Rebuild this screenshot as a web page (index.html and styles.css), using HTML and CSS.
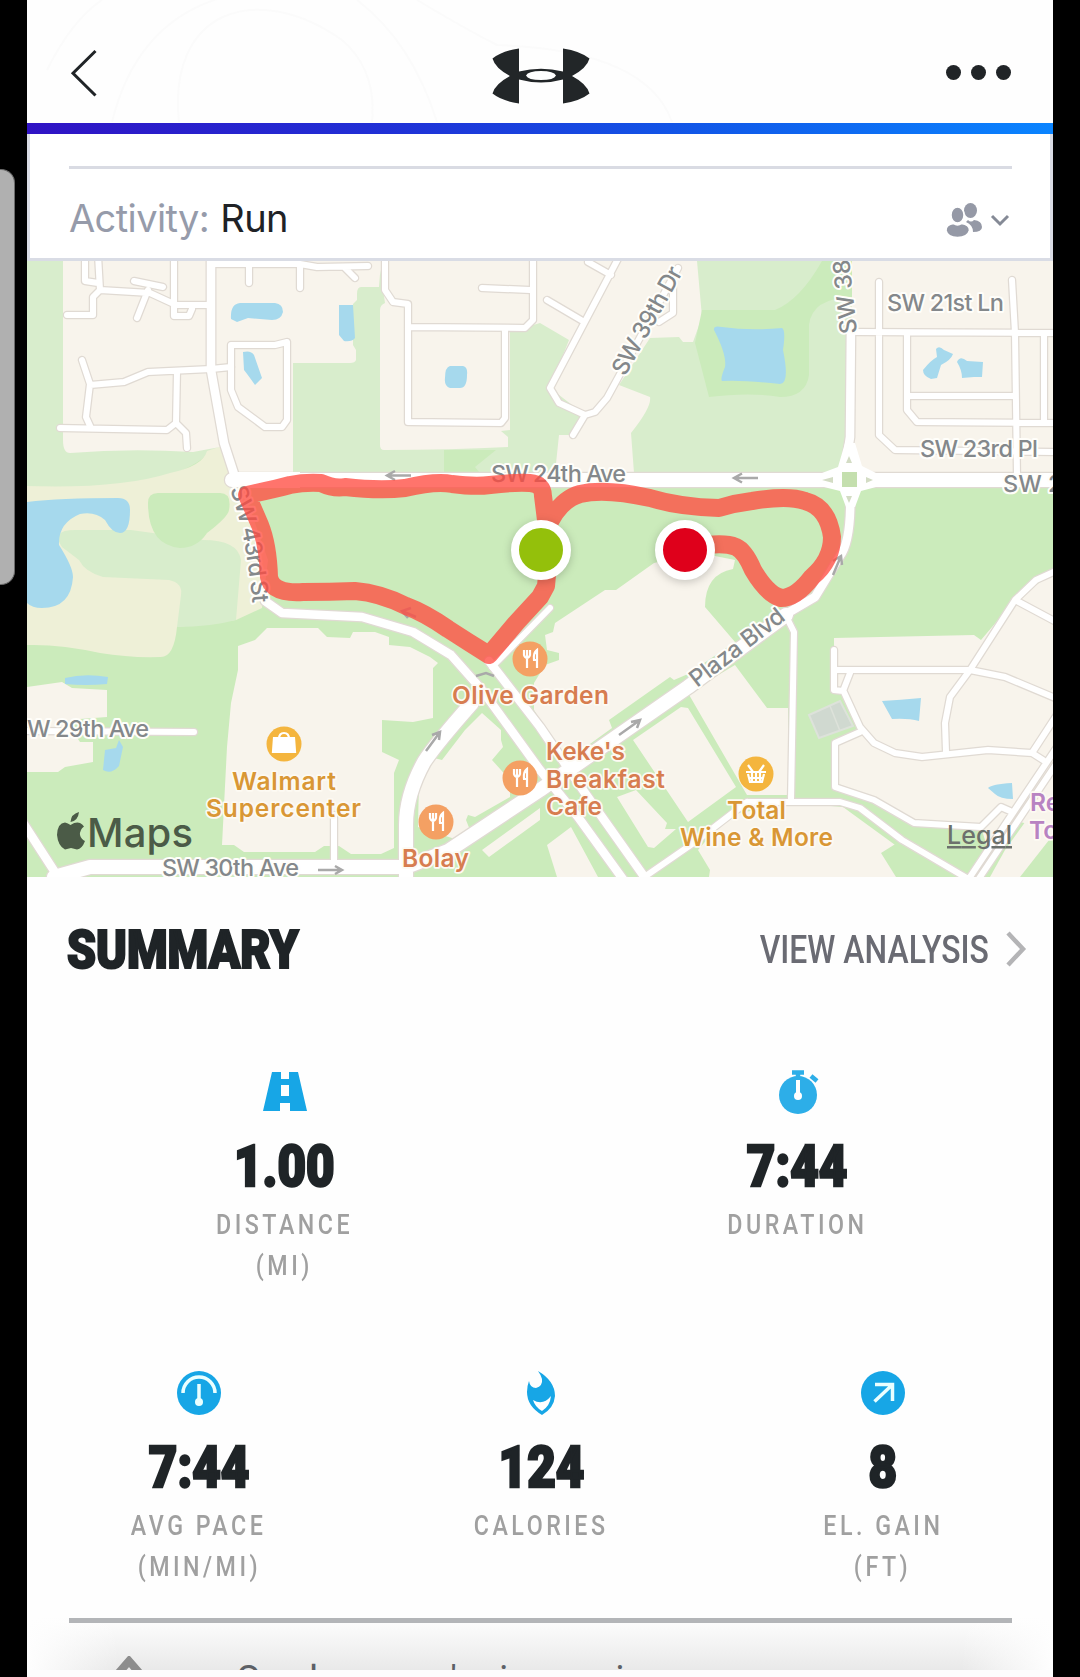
FILE: index.html
```html
<!DOCTYPE html>
<html lang="en">
<head>
<meta charset="utf-8">
<title>Workout summary</title>
<link rel="stylesheet" href="styles.css">
</head>
<body>
<div class="stage">
<div class="edge-handle"></div>
<main class="app">
  <header class="topbar">
    <svg class="contours" viewBox="0 0 1026 122"><path d="M20 70Q45 20 75 0M85 122Q110 20 200-4M152 122C140 10 230-20 315 40Q350 70 345 122M390 0Q440 30 470 45Q620 50 645 122M410 122q-25-80-80-122"/></svg>
    <svg class="back" viewBox="0 0 28 48"><path d="M25.500 2L3 24.200L25.500 46.500"/></svg>
    <svg class="logo" viewBox="0 0 98 56"><path fill-rule="evenodd" d="M27 .5V23.500Q49 18 71 23.500V.5Q88 3 97.500 10.500Q95 20 80 28Q95 36 97.500 45.500Q88 53 71 55.500V31.500Q49 37.500 27 31.500V55.500Q10 53 .5 45.500Q3 36 18 28Q3 20 .5 10.500Q10 3 27 .5ZM34 27.500Q36 32 49 32Q62 32 64 27.500Q62 23 49 23Q36 23 34 27.500Z"/></svg>
    <div class="more"><i></i><i></i><i></i></div>
  </header>
  <div class="accent"></div>
  <section class="activity">
    <div class="rule"></div>
    <div class="activity-row">
      <p class="activity-text"><span>Activity:</span> Run</p>
      <svg class="friends" viewBox="0 0 64 36">
        <g fill="#9599a6"><ellipse cx="24.500" cy="8.500" rx="6.500" ry="7.500"/><path d="M22 18q3 3 6 0q8 1 8 7q0 5-9 5q0-7-7-10z"/><g stroke="#fff" stroke-width="1.500"><ellipse cx="11.500" cy="13" rx="6.500" ry="8"/><path d="M0 28.500q0-6 7.500-7q4 3 8 0q8 1 8 7q-2 7-12 7t-11.500-7z"/></g></g>
        <path d="M46 14l8 8 8-8" fill="none" stroke="#858a96" stroke-width="3"/>
      </svg>
    </div>
  </section>
  <svg class="map" viewBox="27 261 1026 616" xmlns="http://www.w3.org/2000/svg">
    <defs>
      <g id="streets">
        <path d="M85 255V281L98 283M98 255L100 290L93 297V315H67M100 290L150 293L176 305H207M134 281L163 287M148 290L137 318M174 255V316H189L192 309M211 264H300L317 267L368 266M344 267L355 278M249 264V283M300 264V288M82 360L90 384L86 417L91 428M90 385L124 382L148 372L211 369M177 372L176 423L167 430L60 428M176 423L186 433L187 448M211 369L231 367"/>
        <path d="M231 345H275L287 342V420L282 427H265L238 407L231 390Z"/>
        <path d="M385 255V290L393 302L408 304V422L501 423L505 418V328M408 327L525 328L533 320V255M482 288L530 290M620 255L550 388L559 403L585 415L595 412L607 398L678 268M585 415L573 435M547 300L581 320M588 262L611 275M673 285V313L659 322"/>
        <path d="M879 282V435L895 450L1060 452M856 332L1060 333M1012 280L1015 333L1017 475M907 333V410L917 422L1060 423M907 396H1015M1044 333V423"/>
        <path d="M20 731L194 732M334 815V865M550 608L492 667M788 620L794 632L791 800M747 802H840L860 808L902 840L970 880M747 802L695 842L640 880M834 650V690L843 691L850 673M834 670H970L1005 677L1060 700M1060 569L1036 580L1015 600L970 670L950 697L945 723L946 752M1015 600L1060 624M843 690L860 727L874 743L895 753L922 757L988 750L1032 753L1043 760M1032 753L1060 710M860 732L835 743V787L874 800L914 823L981 827L1001 807L1010 811M1063 738L968 880M1069 745L978 880"/>
      </g>
      <g id="mains">
        <path d="M211 255V370L224 443L236 480M851 325L850 437L845 470M850 487Q852 540 840 556L815 597L781 617M265 601L282 613L362 617L413 632L451 655L482 690L540 770L578 817L625 882M489 661L540 727L585 793L648 882"/>
        <path d="M20 818L60 880"/>
      </g>
      <g id="avenues">
        <path d="M232 480H1060M54 877L90 867H406L448 851L540 790L688 687L786 615M472 703Q435 745 424 762Q406 795 406 825V885"/>
      </g>
      <g id="fork"><path d="M-6-9v5q1 3 3 3v10M-3-9v8M0-9v5q-1 3-3 3M7 9V-9Q3-6 4 1H7"/></g>
    </defs>
    <rect x="27" y="261" width="1026" height="616" fill="#cbebbb"/>
    <path fill="#d8edcc" d="M27 261H852V473H238L207 455Q160 495 27 486Z"/>
    <path fill="#eef0d7" d="M27 486Q120 489 170 473Q203 466 207 451L222 446L240 480L268 560L262 608L236 620L177 627Q174 658 160 657Q130 658 100 653Q60 644 27 645Z"/>
    <path fill="#d8edcc" d="M62 547Q50 530 75 530H131L203 540Q238 540 241 560L236 620Q210 627 177 627L181 595Q183 583 169 580L103 577Q85 572 79 560Z"/>
    <path fill="#cbebbb" d="M148 503Q148 493 158 493H220Q232 493 229 510Q228 517 207 533Q197 548 180 548Q148 545 148 503Z"/>
    <path fill="#f8f4ec" d="M63 261H381L379 287H361Q357 287 357 294V300L353 304V345L356 350V360Q355 363 350 363H293V473H240L220 447L193 452Q130 448 70 453Q63 453 63 440Z
      M379 261H540V323L510 332V430L501 431L508 437V447Q450 450 384 450Q380 450 380 445V310Q380 305 385 303Z
      M540 261H697L702 317L693 342H683L679 337L650 338L619 385L650 397Q652 407 631 433L634 473H555L559 435H573L585 415L550 388L569 340L540 323Z
      M852 261H1053V473H856L851 430Z"/>
    <path fill="#cbebbb" d="M822 261H852V297Q812 298 809 325V375Q806 397 780 397Q750 392 709 397L695 343L702 310H775Q800 300 822 261ZM444 450H496L475 467L480 473H444Z"/>
    <path fill="#f8f4ec" d="M267 628H318L327 637L350 638L353 632H375L389 637V645L410 647L430 657L438 663L433 668V718L413 722L382 720V752L399 760L394 773V848L381 854H351L339 846H324L315 852H244L234 845H222L227 747L231 703L238 670V646L255 640Z
      M27 687L62 682L72 688L107 690V717L80 719L70 727L80 742H93V762L65 767L58 772H27Z
      M482 713L501 730V740L503 747L492 760L510 780V797L475 817L468 815L466 820L472 835L458 840L418 827L419 780L430 757L442 760L465 730ZM482 850L540 808V820L489 857Z
      M555 623L605 590H616L654 563L700 553L735 560L733 569Q705 574 705 607L735 642L688 674L674 680L670 677L609 720L612 728L565 762L534 710V683L545 665L559 660V653L547 650L545 635L553 632Z
      M735 665L767 708H788V795H747L688 693Z M633 740L681 707L688 708L736 787L688 822Z M617 797L636 790L667 823L665 829H676L654 848L648 847Z M728 815L795 803L843 807L902 850L957 877H709L710 870L698 850Z M547 845L571 827L598 877H557Z
      M834 638L974 635L981 640L1015 600L1053 573V830L1012 820L991 860L981 827L914 825L871 797L836 783L833 743L864 730L843 690H834Z"/>
    <path fill="#cbebbb" d="M881 853L897 843L960 877H896ZM865 815L912 827L978 831L950 865Z"/>
    <path fill="#f8f4ec" d="M1005 850L1028 818L1053 800V850L1022 877H990Z"/>
    <path fill="#cbebbb" d="M1053 835V877H1020Z"/>
    <path fill="#a6d9ed" d="M27 502Q60 498 118 498Q130 498 130 510Q130 533 120 533Q112 533 105 520Q95 511 80 514Q58 523 59 545Q73 567 73 577Q71 608 42 608Q32 608 27 603Z
      M231 319Q230 304 240 303H275Q283 304 283 312Q281 320 272 320L248 318L237 322ZM339 305H353L355 338Q352 342 344 341L339 335ZM243 352Q251 350 254 355L262 378L255 385Q248 375 244 370ZM450 366H463Q468 367 467 375Q467 388 460 388H450Q444 386 445 378Q445 367 450 366Z
      M714 330Q713 325 722 327Q750 331 782 328Q786 330 783 350Q790 384 780 384Q745 380 722 381Q720 379 725 367Q727 355 714 330ZM936 349Q939 345 944 350L953 354Q951 360 941 365L937 378L931 379Q923 376 923 370Q931 360 937 357ZM957 362Q960 355 967 361L983 362L982 377H974L962 378Q962 370 957 362Z
      M65 678Q85 673 108 677L107 684Q85 686 65 684ZM119 740L123 747L119 766Q111 775 103 770L105 750L116 748ZM882 701Q900 700 921 698L919 721Q908 718 892 719ZM988 788Q992 784 1012 783L1013 799Q1000 799 995 794Z"/>
    <path fill="#d0d9d0" stroke="#dde2da" stroke-width="2" d="M809 715L840 701L853 726L819 738Z"/>
    <path stroke="#dde2da" stroke-width="1.500" d="M830 706L840 731"/>
    <g class="casing"><use href="#streets" stroke-width="8.500"/><use href="#mains" stroke-width="11"/><use href="#avenues" stroke-width="16.500"/></g>
    <g class="road"><use href="#streets" stroke-width="6"/><use href="#mains" stroke-width="8.500"/><use href="#avenues" stroke-width="14"/></g>
    <path fill="#fff" d="M230 472H300V488H240ZM822 473L838 467L845 443H855L862 466L876 473V487L861 491L855 507H846L840 491L824 487Z"/>
    <path fill="#c4dfae" d="M842 472H857V487H842Z"/>
    <path fill="#d3dcc4" d="M822 480L833 477V483ZM866 477L873 480L866 483ZM846 463L849 456L852 463ZM846 496H852L849 503Z"/>
    <g class="arrow"><path d="M411 475.500H387M395 471L387 475.500L395 480M758 478H734M742 473.500L734 478L742 482.500M318 870H342M335 866L342 870L335 874M426 751L440 732M432 735L440 732L439 740M619 735L640 720M631 722L640 720L637 728M833 575L841 556M833 561L841 556L842 565M416 617L402 611M411 608L402 611L408 618M476 676L486 673L494 676"/></g>
    <g class="street">
      <text x="491" y="482" textLength="135">SW 24th Ave</text>
      <text x="887" y="311" textLength="117">SW 21st Ln</text>
      <text x="920" y="457" textLength="118">SW 23rd Pl</text>
      <text x="1003" y="492">SW 2</text>
      <text x="27" y="737" textLength="122">W 29th Ave</text>
      <text x="162" y="876" textLength="137">SW 30th Ave</text>
      <text transform="translate(625 377) rotate(-61)" textLength="120">SW 39th Dr</text>
      <text transform="translate(857 333) rotate(-96)">SW 38</text>
      <text transform="translate(697 688) rotate(-37.500)" textLength="113">Plaza Blvd</text>
      <path id="west-label" fill="none" stroke="none" d="M230 489Q248 540 253 612"/>
      <text textLength="117"><textPath href="#west-label">SW 43rd St</textPath></text>
    </g>
    <g class="route">
      <path d="M547 575L546 586L540 597L517 622L489 655Q468 642 448 629Q425 613 406 606Q380 593 355 591Q330 592 303 592Q272 594 269 577Q268 545 260 525L247 495Q275 489 290 485Q305 482 321 483Q334 489 345 487Q380 491 405 488Q435 481 452 484Q475 487 490 485Q515 482 530 483Q543 484 543 496L547 528Q559 500 580 494Q605 488 650 498Q680 507 719 508Q735 503 752 501Q788 495 805 501Q828 507 832 537Q832 560 812 577Q796 598 781 598Q767 594 753 570Q745 551 736 547Q726 543 708 545"/>
    </g>
    <g class="pin"><circle cx="541" cy="550" r="26" fill="#94c00b"/><circle cx="685" cy="550" r="26" fill="#df001b"/></g>
    <g class="poi-icon">
      <circle cx="530" cy="659" r="17.500"/><use href="#fork" x="530" y="659"/>
      <circle cx="520" cy="778" r="17.500"/><use href="#fork" x="520" y="778"/>
      <circle cx="436" cy="822" r="17.500"/><use href="#fork" x="436" y="822"/>
      <g class="shop"><circle cx="284" cy="744" r="17.500"/><path fill="#fff" d="M274 738H294L295 752H273Z"/><path fill="none" d="M279 739Q279 733 284 733T289 739"/>
      <circle cx="756" cy="774" r="17.500"/><path d="M746 772H766M748 774L750 782H762L764 774M752 772V782M756 772V782M760 772V782M749 778H763M748 765L753 772M764 765L759 772"/></g>
    </g>
    <g class="place">
      <text x="452" y="704" textLength="157">Olive Garden</text>
      <text x="546" y="760" textLength="79">Keke's</text><text x="546" y="788" textLength="119">Breakfast</text><text x="546" y="815" textLength="56">Cafe</text>
      <text x="402" y="867" textLength="67">Bolay</text>
      <g fill="#d99735"><text x="232" y="790" textLength="104">Walmart</text><text x="206" y="817" textLength="155">Supercenter</text><text x="727" y="819" textLength="59">Total</text><text x="680" y="846" textLength="153">Wine &amp; More</text></g>
      <g fill="#b883c2"><text x="1030" y="811">Re</text><text x="1029" y="839">To</text></g>
    </g>
    <text class="legal" x="947" y="844" textLength="65">Legal</text>
    <g fill="#4b5b47"><path d="M79 815Q71 817 70.500 825Q78 824 79 815ZM70.500 828Q76 824.500 80 826Q82.500 827 84 829.500Q79.500 833 80 838Q81 842 85 844Q82 852 77 852.500Q74 851.500 71 851Q68 851.500 65 852.500Q58 849 57 838Q57.500 826 65 825.500Q68 826 70.500 828Z" transform="translate(0 -3)"/><text class="maps" x="87" y="847" textLength="106">Maps</text></g>
  </svg>
  <section class="summary">
    <div class="summary-head"><h1>SUMMARY</h1><a class="analysis"><span>VIEW ANALYSIS</span><svg viewBox="0 0 22 38"><path d="M3 3L18 19L3 35"/></svg></a></div>
    <div class="stats two">
      <div class="stat"><svg viewBox="0 0 46 46"><path fill="#17a6e6" fill-rule="evenodd" d="M10 3H19V10H27V3H36L45 42H28V34H18V42H1ZM19 16V27H27V16Z"/></svg><strong>1.00</strong><span>DISTANCE</span><span>(MI)</span></div>
      <div class="stat"><svg viewBox="0 0 46 46"><circle cx="23" cy="26" r="19" fill="#2daee8"/><path d="M17 3.500H29M23 3V10M36 7L42 12" stroke="#2daee8" stroke-width="4.500"/><path d="M23 11V26" stroke="#fff" stroke-width="4"/><circle cx="23" cy="27" r="4" fill="#fff"/></svg><strong>7:44</strong><span>DURATION</span></div>
    </div>
    <div class="stats three">
      <div class="stat"><svg viewBox="0 0 46 46"><circle cx="23" cy="23" r="22" fill="#17a6e6"/><path d="M7 23A16 16 0 0 1 39 23M23 14V32" stroke="#eaffff" stroke-width="3.500" fill="none"/><circle cx="23" cy="32" r="4" fill="#eaffff"/></svg><strong>7:44</strong><span>AVG PACE</span><span>(MIN/MI)</span></div>
      <div class="stat"><svg viewBox="0 0 46 46"><path fill="#17a6e6" d="M20 1Q37 11 37 26Q36 38 24 45Q9 36 9 22Q9 16 11 11Q12 18 18 18Q25 16 24 9Q23 5 20 1Z"/><path fill="#fff" d="M15 30Q25 36 33 26Q32 36 24 41Q17 37 15 30Z"/></svg><strong>124</strong><span>CALORIES</span></div>
      <div class="stat"><svg viewBox="0 0 46 46"><circle cx="23" cy="23" r="22" fill="#17a6e6"/><path d="M15 14.500H32.500V31M32 15L14.500 31.500" stroke="#eaffff" stroke-width="3.500" fill="none"/></svg><strong>8</strong><span>EL. GAIN</span><span>(FT)</span></div>
    </div>
  </section>
  <footer class="peek">
    <div class="peek-rule"></div>
    <div class="peek-row"><svg viewBox="0 0 34 34"><path d="M4 20L17 5L30 20" /></svg><p>See how you're improving</p></div>
  </footer>
</main>
</div>
</body>
</html>
```
FILE: styles.css
```css
* { box-sizing: border-box; }
body { margin: 0; background: #000; font-family: Roboto, "Liberation Sans", sans-serif; }
h1, p { margin: 0; }
.stage { display: flex; width: 1080px; height: 1677px; background: #000; overflow: hidden; }
.edge-handle { width: 15px; height: 416px; margin: 169px 12px 0 0; background: #b0b0b0; border: 1.5px solid #6b6b6b; border-left: 0; border-radius: 0 14px 14px 0; }
.app { width: 1026px; height: 1677px; background: #fefefe; display: flex; flex-direction: column; }

.topbar { height: 123px; padding: 22px 42px 0 43px; display: grid; grid-template-columns: 30px 1fr 65px; align-items: center; position: relative; flex: none; }
.contours { position: absolute; inset: 0; width: 100%; height: 122px; fill: none; stroke: #fbfbfb; stroke-width: 2; }
.back { width: 28px; height: 48px; fill: none; stroke: #202427; stroke-width: 3; position: relative; }
.logo { width: 98px; height: 56px; fill: #222628; justify-self: center; margin: 7px 0 0 36px; position: relative; }
.more { display: flex; gap: 10px; }
.more i { width: 15px; height: 15px; border-radius: 50%; background: #202427; }
.accent { height: 11px; flex: none; background: linear-gradient(90deg, #3013c4, #2030d6 35%, #1157e8 65%, #0a84ff); }

.activity { height: 127px; flex: none; border: 3px solid #d9dce5; border-top: 0; padding: 32px 38px 0 39px; background: #fff; }
.rule { height: 3px; background: #d9dbe3; }
.activity-row { height: 92px; padding-top: 5px; display: flex; align-items: center; justify-content: space-between; }
.activity-text { font: 400 38px Inter, sans-serif; letter-spacing: -.6px; color: #202226; }
.activity-text span { color: #969baa; margin-right: 1px; }
.friends { width: 64px; height: 36px; margin: 4px 2px 0 0; }

.map { display: block; width: 1026px; height: 616px; flex: none; font-family: Inter, sans-serif; }
.casing, .road { fill: none; stroke-linecap: round; stroke-linejoin: round; }
.casing { stroke: #e0dad3; }
.road { stroke: #fff; }
.arrow { fill: none; stroke: #a9a9a9; stroke-width: 2.5; }
.street text { font-size: 23.5px; font-weight: 500; fill: #84888b; stroke: #fffefa; stroke-width: 4px; stroke-linejoin: round; paint-order: stroke; }
.route path { fill: none; stroke: #ff4a40; stroke-opacity: .77; stroke-width: 18; stroke-linejoin: round; stroke-linecap: round; }
.pin circle { stroke: #fff; stroke-width: 8; filter: drop-shadow(0 2px 4px rgba(0, 0, 0, .2)); }
.poi-icon { fill: #f4a063; }
.poi-icon use, .poi-icon .shop path { stroke: #fff; stroke-width: 2.2; }
.poi-icon use { fill: none; }
.shop { fill: #f4b53e; }
.shop path:last-child { fill: none; }
.place { fill: #d77d50; }
.place text { font-size: 24.5px; font-weight: 600; stroke: #fdfaf3; stroke-width: 3.5px; stroke-linejoin: round; paint-order: stroke; }
.legal { font-size: 25px; font-weight: 500; fill: #6c716c; text-decoration: underline; }
.maps { font-size: 40px; font-weight: 500; }

.summary { height: 741px; flex: none; background: #fefefe; }
.summary-head { display: flex; justify-content: space-between; align-items: center; height: 60px; margin: 43px 26px 0 40px; }
h1 { font-size: 53px; font-weight: 900; line-height: 60px; color: #1f2427; -webkit-text-stroke: 2.2px #1f2427; transform: scaleX(.876); transform-origin: left; }
.analysis { display: flex; align-items: center; color: #6a6b73; gap: 14px; }
.analysis span { font-size: 38px; font-weight: 500; line-height: 60px; transform: scaleX(.84); transform-origin: right; margin-right: 2px; }
.analysis svg { width: 22px; height: 38px; fill: none; stroke: #b4b4b6; stroke-width: 4.5; margin-top: -3px; }
.stats { display: grid; }
.two { grid-template-columns: 1fr 1fr; margin-top: 89px; height: 301px; }
.three { grid-template-columns: repeat(3, 1fr); }
.stat { display: flex; flex-direction: column; align-items: center; padding-left: 2px; }
.stat svg { width: 46px; height: 46px; }
.stat strong { font-size: 58px; font-weight: 900; line-height: 70px; margin-top: 16px; color: #1f2427; -webkit-text-stroke: 2.6px #1f2427; transform: scaleX(.85); }
.stat span { font-size: 28px; font-weight: 500; line-height: 41px; letter-spacing: 4.2px; color: #a0a0a0; transform: scaleX(.83); }
.stat strong + span { margin-top: 3px; }

.peek { flex: 1; border-bottom: 7px solid #fdfdfd; overflow: hidden; background: linear-gradient(90deg, #fefefe, transparent 9%, transparent 91%, #fefefe), linear-gradient(#fefefe, #e9e9e9); }
.peek-rule { height: 5px; margin: 0 41px 0 42px; background: #b3b5b8; }
.peek-row { display: flex; gap: 91px; padding: 33px 0 0 85px; }
.peek-row svg { width: 34px; height: 34px; fill: none; stroke: #8d8d8d; stroke-width: 8; }
.peek-row p { font-size: 38px; line-height: 44px; padding-top: 2px; color: #5c6066; white-space: nowrap; }
```
